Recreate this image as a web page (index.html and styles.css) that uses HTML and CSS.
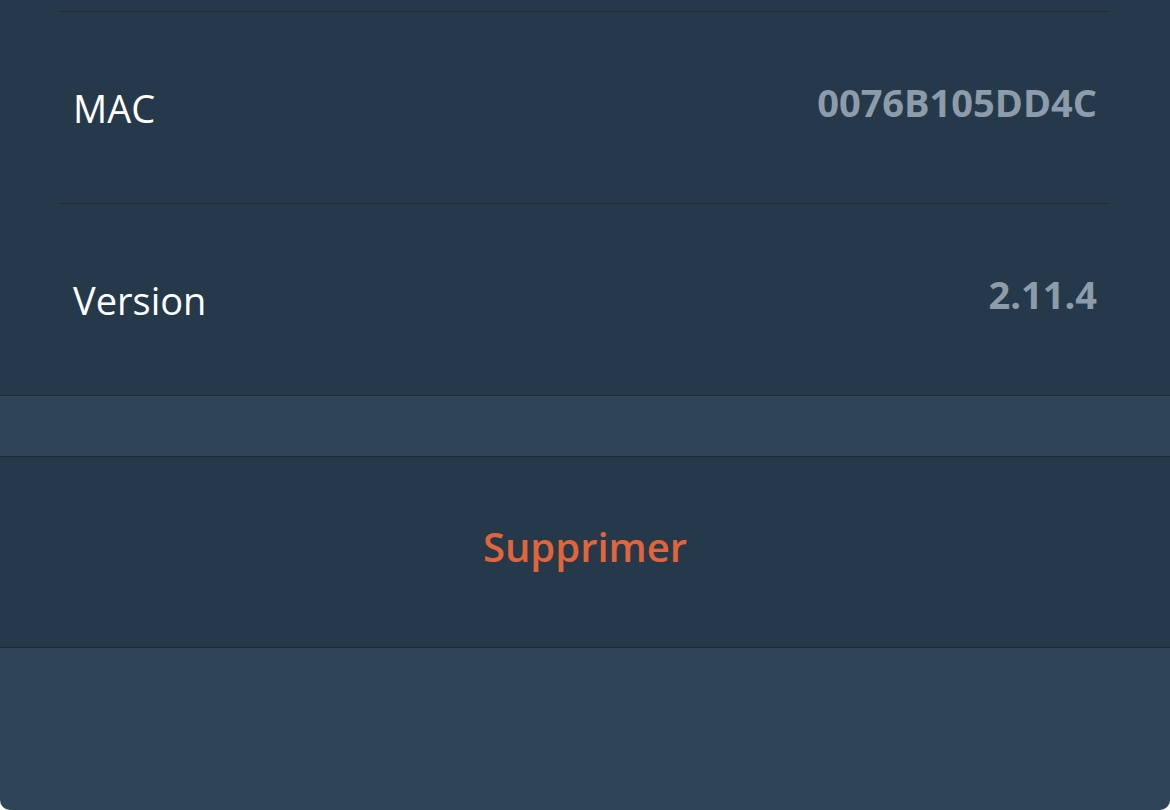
FILE: index.html
```html
<!DOCTYPE html>
<html lang="fr">
<head>
<meta charset="utf-8">
<link rel="stylesheet" href="styles.css">
<title>Appareil</title>
</head>
<body>
<div class="sheet">
  <section class="group">
    <div class="top-gap"></div>
    <div class="row">
      <span class="label">MAC</span>
      <span class="value">0076B105DD4C</span>
    </div>
    <div class="row">
      <span class="label">Version</span>
      <span class="value">2.11.4</span>
    </div>
  </section>
  <div class="spacer"></div>
  <section class="group action">
    <button class="delete" type="button">Supprimer</button>
  </section>
  <div class="footer"></div>
</div>
</body>
</html>
```

FILE: styles.css
```css
html, body {
  margin: 0;
  padding: 0;
  background: #ffffff;
}

body {
  width: 1170px;
  height: 810px;
  overflow: hidden;
  font-family: "Open Sans", "Noto Sans", sans-serif;
}

.sheet {
  height: 810px;
  display: flex;
  flex-direction: column;
  background: #2e4458;
  border-radius: 0 0 10px 10px;
  overflow: hidden;
}

.group {
  background: #25394a;
  border-bottom: 1px solid #1c2a36;
}

.top-gap {
  height: 11px;
}

.row {
  margin: 0 61px 0 59px;
  height: 191px;
  border-top: 1px solid #1c2a36;
  display: flex;
  align-items: center;
  justify-content: space-between;
  padding: 0 12px 0 14px;
}

.label {
  color: #ffffff;
  font-size: 38px;
  font-weight: 400;
  letter-spacing: 0;
}

.value {
  color: #8d9cab;
  font-size: 38px;
  font-weight: 700;
  letter-spacing: 0;
  position: relative;
  top: -6px;
}

.spacer {
  height: 60px;
}

.action {
  border-top: 1px solid #1c2a36;
  height: 190px;
  display: flex;
  align-items: center;
  justify-content: center;
}

.delete {
  background: none;
  border: 0;
  padding: 0;
  color: #e2643a;
  font-family: inherit;
  font-size: 40px;
  font-weight: 600;
  position: relative;
  top: -6px;
  cursor: pointer;
}

.footer {
  flex: 1;
}
```
